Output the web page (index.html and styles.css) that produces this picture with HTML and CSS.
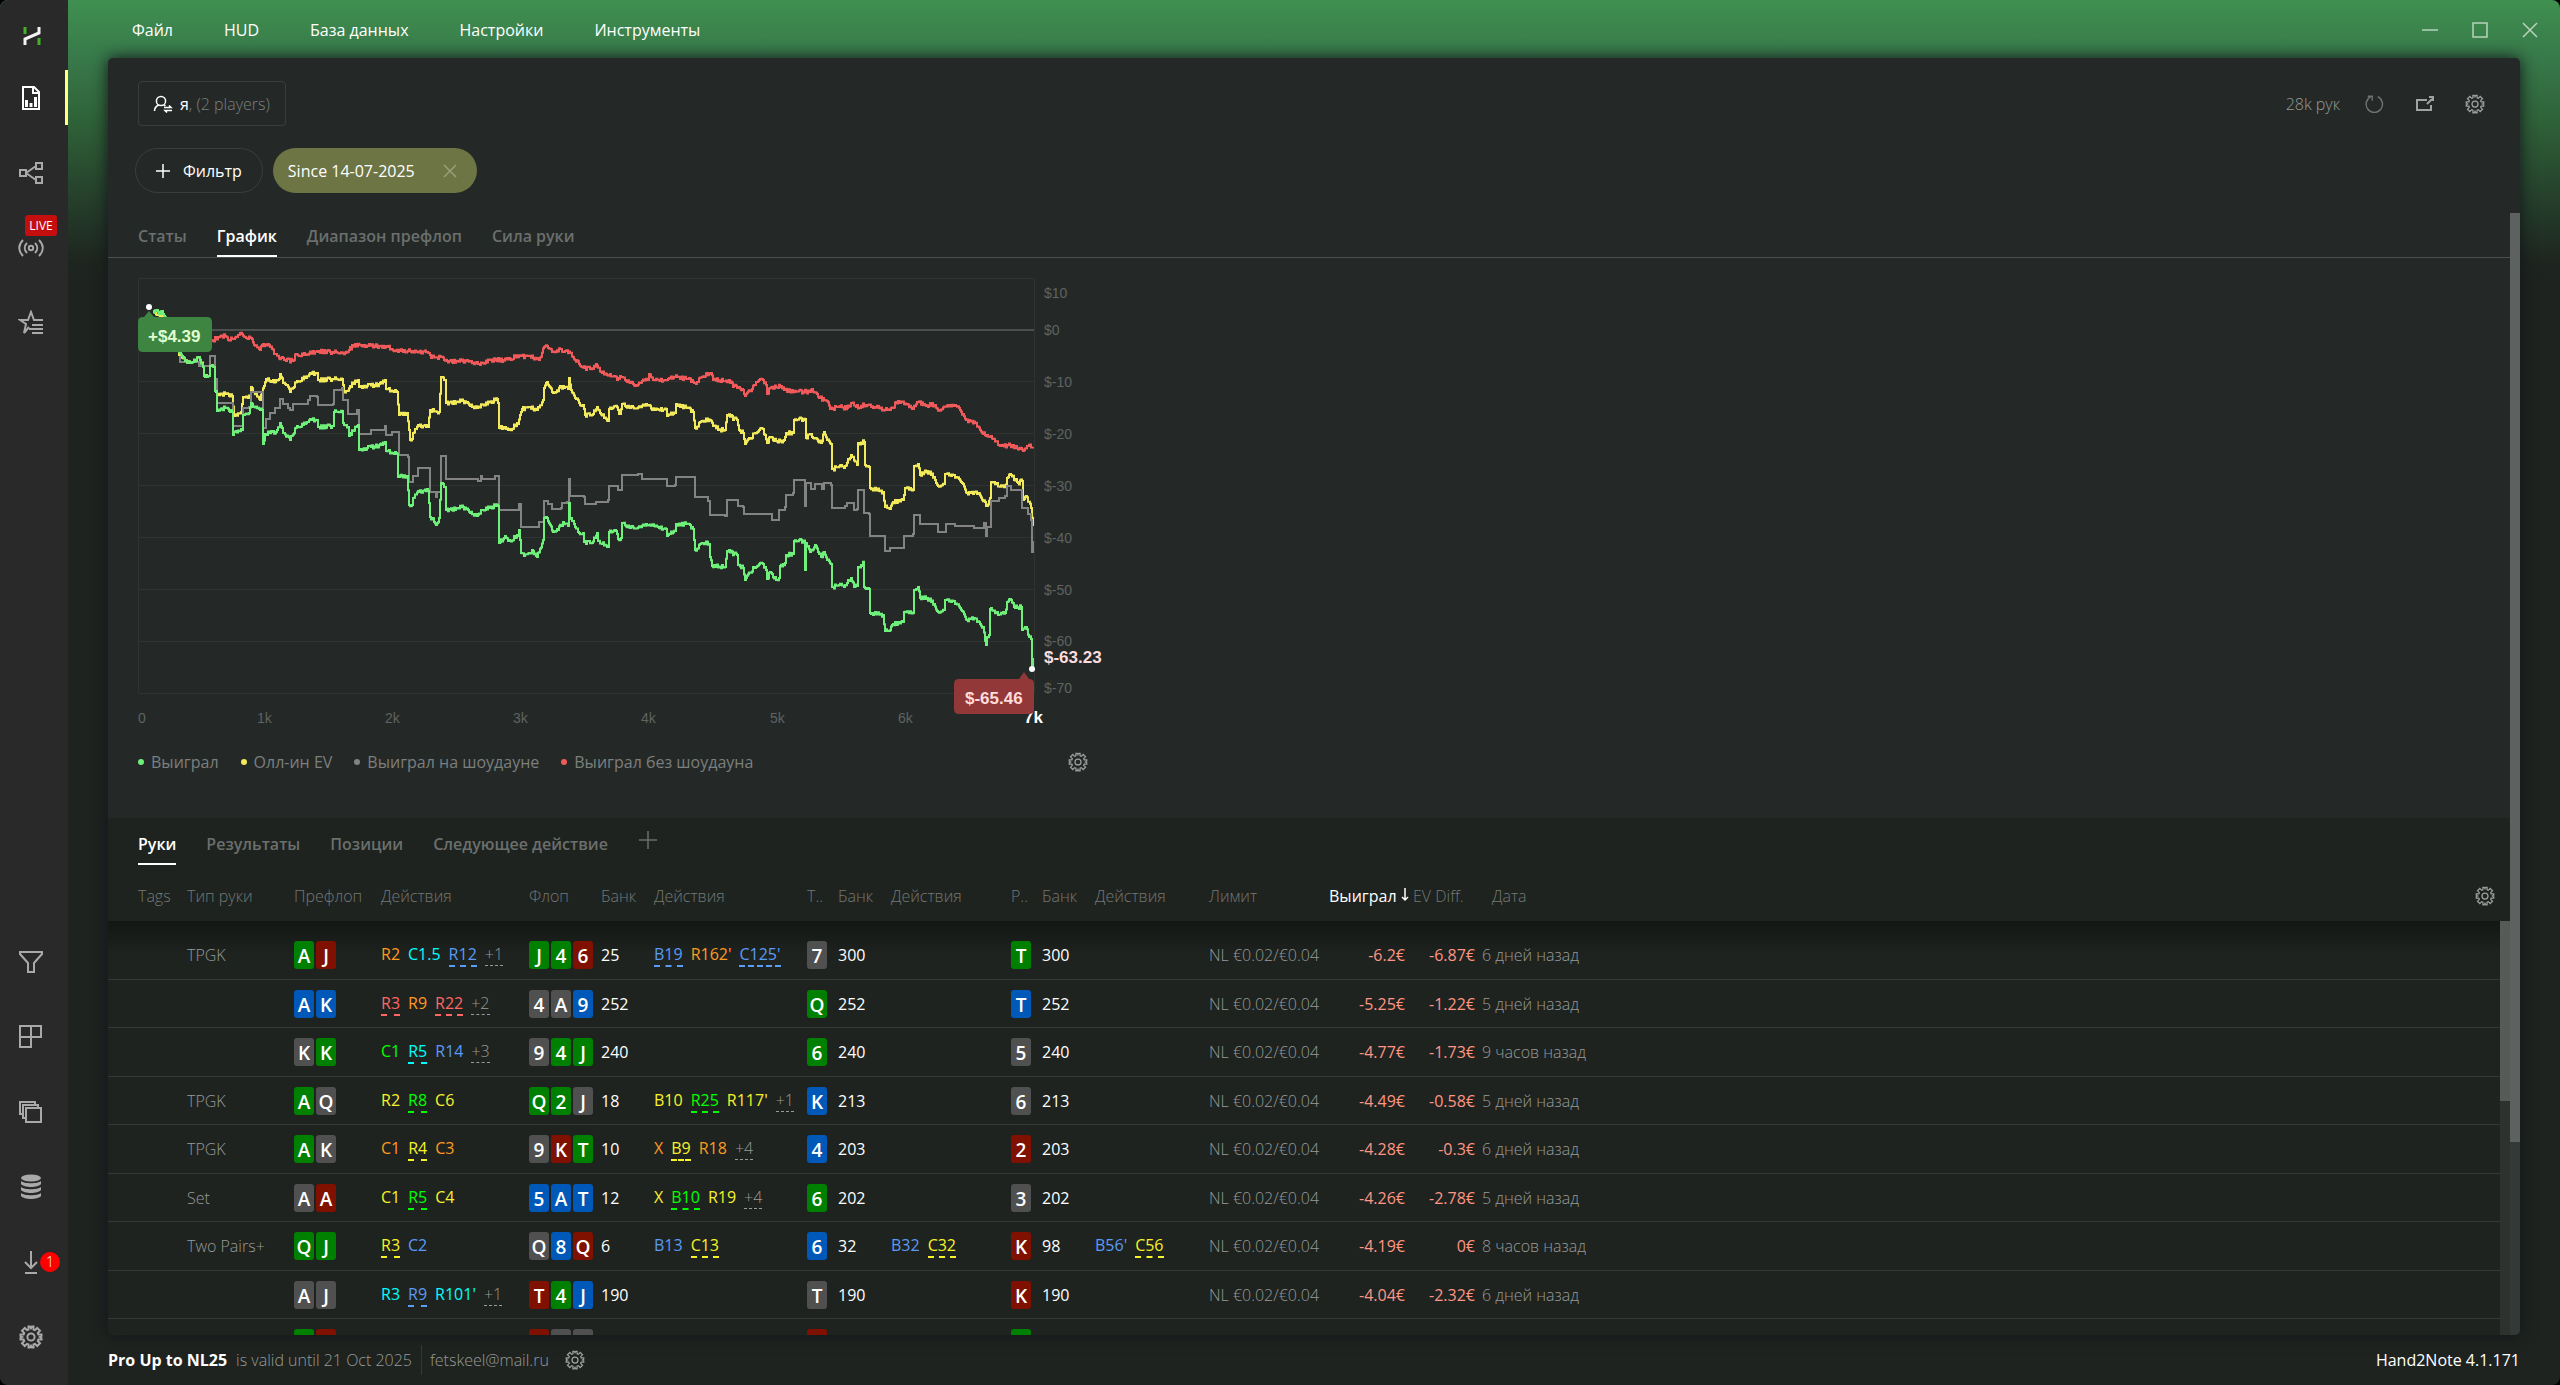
FILE: index.html
```html
<!DOCTYPE html>
<html lang="ru">
<head>
  <meta charset="utf-8">
  <title>Hand2Note</title>
  <link rel="stylesheet" href="styles.css">
</head>
<body>

  <svg class="defs" width="0" height="0" aria-hidden="true">
    <symbol id="gear" viewBox="0 0 24 24">
      <path d="M9.500 4.600 L9.500 1.500 H11 L12 3.200 L13 1.500 H14.500 L14.500 4.600 L16 5.200 L18.200 3 L21 5.800 L18.800 8 L19.400 9.500 H22.500 V11 L20.800 12 L22.500 13 V14.500 H19.400 L18.800 16 L21 18.200 L18.200 21 L16 18.800 L14.500 19.400 V22.500 H13 L12 20.800 L11 22.500 H9.500 V19.400 L8 18.800 L5.800 21 L3 18.200 L5.200 16 L4.600 14.500 H1.500 V13 L3.200 12 L1.500 11 V9.500 H4.600 L5.200 8 L3 5.800 L5.800 3 L8 5.200 Z"/>
      <circle cx="12" cy="12" r="3.600"/>
    </symbol>
  </svg>

  <div class="app">

    <aside class="sidebar">
      <div class="logo">
        <svg width="24" height="24" viewBox="0 0 24 24">
          <path class="logo-green" d="M5 3v7M19 14v7"/>
          <path class="logo-white" d="M5 21v-6L19 9V3"/>
        </svg>
      </div>

      <nav class="side-group">
        <button class="side-btn active" aria-label="Отчёты">
          <svg width="24" height="26" viewBox="0 0 24 26">
            <path d="M4 2h11l5 5v17H4z M14 2v6h6"/>
            <path class="solid" d="M6 15h3v7h-3z M10.500 18h3v4h-3z M15 12h3v10h-3z"/>
          </svg>
        </button>
        <button class="side-btn" aria-label="Дерево">
          <svg width="26" height="24" viewBox="0 0 26 24">
            <path d="M2 9h6v6H2z M18 2h6v6h-6z M18 16h6v6h-6z M8 12L18 5 M8 12l10 7"/>
          </svg>
        </button>
        <button class="side-btn" aria-label="Live">
          <span class="live">LIVE</span>
          <svg width="26" height="20" viewBox="0 0 26 20">
            <circle cx="13" cy="10" r="2.200"/>
            <path d="M9 5c-3 3-3 7 0 10 M17 5c3 3 3 7 0 10 M5 2c-5 5-5 11 0 16 M21 2c5 5 5 11 0 16"/>
          </svg>
        </button>
        <button class="side-btn" aria-label="Избранное">
          <svg width="26" height="26" viewBox="0 0 26 26">
            <path d="M11 17l-5 6 2-9-6-4h8l3-8 3 8h9 M14 15h11 M11 19h14 M14 23h11"/>
          </svg>
        </button>
      </nav>

      <nav class="side-group">
        <button class="side-btn" aria-label="Фильтры">
          <svg width="26" height="26" viewBox="0 0 26 26"><path d="M2 3h22v2l-8 9v9h-6v-9L2 5z"/></svg>
        </button>
        <button class="side-btn" aria-label="Панели">
          <svg width="26" height="26" viewBox="0 0 26 26"><path d="M2 2h21v11H2z M13 2v21H2V2z"/></svg>
        </button>
        <button class="side-btn" aria-label="Окна">
          <svg width="26" height="26" viewBox="0 0 26 26"><path d="M8 9h15v14H8z M8 19H5V6h15v3 M5 15H2V3h15v3"/></svg>
        </button>
        <button class="side-btn" aria-label="База данных">
          <svg width="24" height="28" viewBox="0 0 24 28">
            <ellipse class="solid" cx="12" cy="5" rx="10" ry="3.500"/>
            <path class="solid" d="M2 8c3 3 17 3 20 0v3c-3 4-17 4-20 0z M2 14c3 3 17 3 20 0v3c-3 4-17 4-20 0z M2 20c3 3 17 3 20 0v3c-3 4-17 4-20 0z"/>
          </svg>
        </button>
        <button class="side-btn" aria-label="Загрузки">
          <svg width="26" height="26" viewBox="0 0 26 26"><path d="M13 2v17 M7 13l6 6 6-6 M7 24h12"/></svg>
          <span class="count">1</span>
        </button>
        <button class="side-btn" aria-label="Настройки">
          <svg width="24" height="24"><use href="#gear"/></svg>
        </button>
      </nav>
    </aside>

    <div class="main">

      <header class="titlebar">
        <nav class="menu">
          <button>Файл</button>
          <button>HUD</button>
          <button>База данных</button>
          <button>Настройки</button>
          <button>Инструменты</button>
        </nav>
        <div class="window-btns">
          <button aria-label="Свернуть"><svg width="18" height="18" viewBox="0 0 18 18"><path d="M1 9h16"/></svg></button>
          <button aria-label="Развернуть"><svg width="18" height="18" viewBox="0 0 18 18"><path d="M2 2h14v14H2z"/></svg></button>
          <button aria-label="Закрыть"><svg width="18" height="18" viewBox="0 0 18 18"><path d="M2 2l14 14M16 2L2 16"/></svg></button>
        </div>
      </header>

      <main class="panel">
        <div class="toolbar">
          <button class="player">
            <svg width="20" height="18" viewBox="0 0 20 18">
              <circle cx="8" cy="6" r="4.600"/>
              <path d="M1.500 16c0-3 2-5 4-6 M11 11l1.500-1 M11 12.500h7l-2-2 M19 15.500h-7l2 2"/>
            </svg>
            <span><b>я</b>, (2 players)</span>
          </button>
          <div class="toolbar-right">
            <span>28k рук</span>
            <button class="dim" aria-label="Обновить">
              <svg width="20" height="20" viewBox="0 0 22 22"><path d="M14 3a9 9 0 1 1-7.500 0 M3 2.500h5v5"/></svg>
            </button>
            <button aria-label="Открыть в окне">
              <svg width="20" height="20" viewBox="0 0 20 20"><path class="thick" d="M12 6H2v10h14v-5 M12 10l5-5 M14 3h4v4"/></svg>
            </button>
            <button aria-label="Настройки отчёта"><svg width="20" height="20"><use href="#gear"/></svg></button>
          </div>
        </div>

        <div class="filters">
          <button class="add-filter">
            <svg width="16" height="16" viewBox="0 0 16 16"><path d="M8 1v14M1 8h14"/></svg>
            Фильтр
          </button>
          <button class="chip">
            Since 14-07-2025
            <svg width="14" height="14" viewBox="0 0 14 14"><path d="M1 1l12 12M13 1L1 13"/></svg>
          </button>
        </div>

        <div class="scroll">
          <div class="scroll-body">
            <nav class="tabs">
              <button>Статы</button>
              <button class="active">График</button>
              <button>Диапазон префлоп</button>
              <button>Сила руки</button>
            </nav>

            <section class="graph">
              <svg id="chart" width="980" height="460" viewBox="8 0 980 460">
                <path class="grid" d="M8.500 8.500H904.500V423.500H8.500z M8 111.500h896 M8 163.500h896 M8 215.500h896 M8 267.500h896 M8 319.500h896 M8 371.500h896"/>
                <path class="zero" d="M8 60h896"/>
                <g class="axis">
                  <text x="914" y="28">$10</text>
                  <text x="914" y="65">$0</text>
                  <text x="914" y="117">$-10</text>
                  <text x="914" y="169">$-20</text>
                  <text x="914" y="221">$-30</text>
                  <text x="914" y="273">$-40</text>
                  <text x="914" y="325">$-50</text>
                  <text x="914" y="376">$-60</text>
                  <text x="914" y="423">$-70</text>
                  <text x="8" y="453">0</text>
                  <text x="127" y="453">1k</text>
                  <text x="255" y="453">2k</text>
                  <text x="383" y="453">3k</text>
                  <text x="511" y="453">4k</text>
                  <text x="640" y="453">5k</text>
                  <text x="768" y="453">6k</text>
                </g>
                <g id="lines"></g>
                <text class="current" x="914" y="393">$-63.23</text>
                <text class="last-x" x="894" y="453">7k</text>
                <path class="tip-up" d="M14 47l5-6 5 6h53q5 0 5 5v25q0 5-5 5H13q-5 0-5-5V52q0-5 5-5z"/>
                <text class="tip-up-text" x="18" y="72">+$4.39</text>
                <path class="tip-down" d="M889 409l5-7 5 7q5 0 5 5v25q0 5-5 5h-70q-5 0-5-5v-25q0-5 5-5z"/>
                <text class="tip-down-text" x="835" y="434">$-65.46</text>
                <circle class="dot" cx="19" cy="37" r="3"/>
                <circle class="dot" cx="902" cy="399" r="3"/>
              </svg>
              <div class="legend">
                <ul>
                  <li class="l-green">Выиграл</li>
                  <li class="l-yellow">Олл-ин EV</li>
                  <li class="l-gray">Выиграл на шоудауне</li>
                  <li class="l-red">Выиграл без шоудауна</li>
                </ul>
                <button class="icon-btn" aria-label="Настройки графика"><svg width="20" height="20"><use href="#gear"/></svg></button>
              </div>
            </section>

            <section class="hands">
              <nav class="tabs">
                <button class="active">Руки</button>
                <button>Результаты</button>
                <button>Позиции</button>
                <button>Следующее действие</button>
                <button class="add-tab" aria-label="Добавить"><svg width="20" height="20" viewBox="0 0 20 20"><path d="M10 1v18M1 10h18"/></svg></button>
              </nav>

              <div class="table-wrap">
                <table>
                  <colgroup>
                    <col class="c-tags"><col class="c-type"><col class="c-pre"><col class="c-act1"><col class="c-flop"><col class="c-bank"><col class="c-act2"><col class="c-card"><col class="c-bank"><col class="c-act3"><col class="c-card"><col class="c-bank"><col class="c-act4"><col class="c-limit"><col class="c-won"><col class="c-ev"><col>
                  </colgroup>
                  <thead>
                    <tr>
                      <th>Tags</th><th>Тип руки</th><th>Префлоп</th><th>Действия</th><th>Флоп</th><th>Банк</th><th>Действия</th><th>Т..</th><th>Банк</th><th>Действия</th><th>Р..</th><th>Банк</th><th>Действия</th><th>Лимит</th>
                      <th class="sorted">Выиграл <svg width="8" height="14" viewBox="0 0 8 14"><path d="M4 0v12M1 9l3 3 3-3"/></svg></th>
                      <th class="ev">EV Diff.</th>
                      <th class="date"><div>Дата <button class="icon-btn" aria-label="Колонки"><svg width="20" height="20"><use href="#gear"/></svg></button></div></th>
                    </tr>
                  </thead>
                  <tbody>
                    <tr>
                      <td></td><td>TPGK</td>
                      <td><i class="card g">A</i><i class="card r">J</i></td>
                      <td><span class="a orange">R2</span><span class="a cyan">C1.5</span><span class="a blue u">R12</span><span class="more">+1</span></td>
                      <td><i class="card g">J</i><i class="card g">4</i><i class="card r">6</i></td>
                      <td class="bank">25</td>
                      <td><span class="a blue u">B19</span><span class="a orange">R162'</span><span class="a blue u">C125'</span></td>
                      <td><i class="card s">7</i></td><td class="bank">300</td><td></td>
                      <td><i class="card g">T</i></td><td class="bank">300</td><td></td>
                      <td>NL €0.02/€0.04</td><td class="loss">-6.2€</td><td class="loss">-6.87€</td><td class="date">6 дней назад</td>
                    </tr>
                    <tr>
                      <td></td><td></td>
                      <td><i class="card b">A</i><i class="card b">K</i></td>
                      <td><span class="a red u">R3</span><span class="a orange">R9</span><span class="a red u">R22</span><span class="more">+2</span></td>
                      <td><i class="card s">4</i><i class="card s">A</i><i class="card b">9</i></td>
                      <td class="bank">252</td><td></td>
                      <td><i class="card g">Q</i></td><td class="bank">252</td><td></td>
                      <td><i class="card b">T</i></td><td class="bank">252</td><td></td>
                      <td>NL €0.02/€0.04</td><td class="loss">-5.25€</td><td class="loss">-1.22€</td><td class="date">5 дней назад</td>
                    </tr>
                    <tr>
                      <td></td><td></td>
                      <td><i class="card s">K</i><i class="card g">K</i></td>
                      <td><span class="a green">C1</span><span class="a cyan u">R5</span><span class="a blue">R14</span><span class="more">+3</span></td>
                      <td><i class="card s">9</i><i class="card g">4</i><i class="card g">J</i></td>
                      <td class="bank">240</td><td></td>
                      <td><i class="card g">6</i></td><td class="bank">240</td><td></td>
                      <td><i class="card s">5</i></td><td class="bank">240</td><td></td>
                      <td>NL €0.02/€0.04</td><td class="loss">-4.77€</td><td class="loss">-1.73€</td><td class="date">9 часов назад</td>
                    </tr>
                    <tr>
                      <td></td><td>TPGK</td>
                      <td><i class="card g">A</i><i class="card s">Q</i></td>
                      <td><span class="a yellow">R2</span><span class="a green u">R8</span><span class="a yellow">C6</span></td>
                      <td><i class="card g">Q</i><i class="card g">2</i><i class="card s">J</i></td>
                      <td class="bank">18</td>
                      <td><span class="a yellow">B10</span><span class="a green u">R25</span><span class="a yellow">R117'</span><span class="more">+1</span></td>
                      <td><i class="card b">K</i></td><td class="bank">213</td><td></td>
                      <td><i class="card s">6</i></td><td class="bank">213</td><td></td>
                      <td>NL €0.02/€0.04</td><td class="loss">-4.49€</td><td class="loss">-0.58€</td><td class="date">5 дней назад</td>
                    </tr>
                    <tr>
                      <td></td><td>TPGK</td>
                      <td><i class="card g">A</i><i class="card s">K</i></td>
                      <td><span class="a orange">C1</span><span class="a yellow u">R4</span><span class="a orange">C3</span></td>
                      <td><i class="card s">9</i><i class="card r">K</i><i class="card g">T</i></td>
                      <td class="bank">10</td>
                      <td><span class="a orange">X</span><span class="a yellow u">B9</span><span class="a orange">R18</span><span class="more">+4</span></td>
                      <td><i class="card b">4</i></td><td class="bank">203</td><td></td>
                      <td><i class="card r">2</i></td><td class="bank">203</td><td></td>
                      <td>NL €0.02/€0.04</td><td class="loss">-4.28€</td><td class="loss">-0.3€</td><td class="date">6 дней назад</td>
                    </tr>
                    <tr>
                      <td></td><td>Set</td>
                      <td><i class="card s">A</i><i class="card r">A</i></td>
                      <td><span class="a yellow">C1</span><span class="a green u">R5</span><span class="a yellow">C4</span></td>
                      <td><i class="card b">5</i><i class="card b">A</i><i class="card b">T</i></td>
                      <td class="bank">12</td>
                      <td><span class="a yellow">X</span><span class="a green u">B10</span><span class="a yellow">R19</span><span class="more">+4</span></td>
                      <td><i class="card g">6</i></td><td class="bank">202</td><td></td>
                      <td><i class="card s">3</i></td><td class="bank">202</td><td></td>
                      <td>NL €0.02/€0.04</td><td class="loss">-4.26€</td><td class="loss">-2.78€</td><td class="date">5 дней назад</td>
                    </tr>
                    <tr>
                      <td></td><td>Two Pairs+</td>
                      <td><i class="card g">Q</i><i class="card g">J</i></td>
                      <td><span class="a yellow u">R3</span><span class="a blue">C2</span></td>
                      <td><i class="card s">Q</i><i class="card b">8</i><i class="card r">Q</i></td>
                      <td class="bank">6</td>
                      <td><span class="a blue">B13</span><span class="a yellow u">C13</span></td>
                      <td><i class="card b">6</i></td><td class="bank">32</td>
                      <td><span class="a blue">B32</span><span class="a yellow u">C32</span></td>
                      <td><i class="card r">K</i></td><td class="bank">98</td>
                      <td><span class="a blue">B56'</span><span class="a yellow u">C56</span></td>
                      <td>NL €0.02/€0.04</td><td class="loss">-4.19€</td><td class="loss">0€</td><td class="date">8 часов назад</td>
                    </tr>
                    <tr>
                      <td></td><td></td>
                      <td><i class="card s">A</i><i class="card s">J</i></td>
                      <td><span class="a cyan">R3</span><span class="a blue u">R9</span><span class="a cyan">R101'</span><span class="more">+1</span></td>
                      <td><i class="card r">T</i><i class="card g">4</i><i class="card b">J</i></td>
                      <td class="bank">190</td><td></td>
                      <td><i class="card s">T</i></td><td class="bank">190</td><td></td>
                      <td><i class="card r">K</i></td><td class="bank">190</td><td></td>
                      <td>NL €0.02/€0.04</td><td class="loss">-4.04€</td><td class="loss">-2.32€</td><td class="date">6 дней назад</td>
                    </tr>
                    <tr>
                      <td></td><td></td>
                      <td><i class="card g"></i><i class="card r"></i></td><td></td>
                      <td><i class="card r"></i><i class="card s"></i><i class="card s"></i></td><td></td><td></td>
                      <td><i class="card r"></i></td><td></td><td></td>
                      <td><i class="card g"></i></td><td></td><td></td>
                      <td></td><td></td><td></td><td></td>
                    </tr>
                  </tbody>
                </table>
                <div class="bar bar-inner"><div class="thumb"></div></div>
              </div>
            </section>
          </div>
          <div class="bar bar-outer"><div class="thumb"></div></div>
        </div>
      </main>

      <footer class="status">
        <b>Pro Up to NL25</b>
        <span class="valid">is valid until 21 Oct 2025</span>
        <span class="mail">fetskeel@mail.ru</span>
        <button class="icon-btn" aria-label="Аккаунт"><svg width="20" height="20"><use href="#gear"/></svg></button>
        <span class="version">Hand2Note 4.1.171</span>
      </footer>
    </div>
  </div>

  <script src="chart.js"></script>
</body>
</html>
```
FILE: styles.css
```css
* {
  box-sizing: border-box;
}

body {
  margin: 0;
  background: #000;
  color: #979a98;
  font-family: "Open Sans", "Noto Sans", sans-serif;
  font-size: 16px;
  font-weight: 300;
}

button {
  padding: 0;
  border: 0;
  background: none;
  color: inherit;
  font: inherit;
  cursor: pointer;
}

svg {
  display: block;
  fill: none;
  stroke: currentColor;
  stroke-width: 1.5;
}

.defs {
  position: absolute;
}

.solid {
  fill: currentColor;
  stroke: none;
}

.thick {
  stroke-width: 2;
}

.app {
  display: flex;
  height: 100vh;
  border-radius: 8px;
  overflow: hidden;
  background: linear-gradient(#3f9050 0, #38794a 58px, #2f6238 120px, #253f2b 200px, #1e251f 262px, #1e231f 280px);
}

/* sidebar */
.sidebar {
  flex: 0 0 68px;
  display: flex;
  flex-direction: column;
  background: #292929;
  padding-bottom: 11px;
}

.logo {
  height: 60px;
  padding: 24px 20px 0;
}

.logo svg {
  stroke-width: 3;
}

.logo-green {
  stroke: #43b02a;
}

.logo-white {
  stroke: #f2f2f2;
}

.side-group {
  display: flex;
  flex-direction: column;
}

.side-group + .side-group {
  margin-top: auto;
}

.side-btn {
  position: relative;
  display: flex;
  align-items: center;
  justify-content: center;
  height: 75px;
  padding-right: 6px;
  color: #a9a9a9;
}

.side-btn svg {
  stroke-width: 2;
}

.side-btn.active {
  color: #fff;
}

.side-btn.active::after {
  content: "";
  position: absolute;
  right: 0;
  top: 10px;
  width: 3px;
  height: 55px;
  background: #ffff80;
}

.live {
  position: absolute;
  left: 25px;
  top: 5px;
  width: 32px;
  border-radius: 3px;
  background: #c50f0f;
  color: #fff;
  font-size: 12px;
  font-weight: 400;
  line-height: 21px;
}

.count {
  position: absolute;
  left: 40px;
  top: 28px;
  width: 20px;
  border-radius: 10px;
  background: #f00;
  color: #fff;
  font-size: 14px;
  line-height: 20px;
}

/* title bar */
.main {
  flex: 1;
  min-width: 0;
  display: flex;
  flex-direction: column;
  padding: 0 40px;
}

.titlebar {
  flex: 0 0 58px;
  display: flex;
  justify-content: space-between;
  align-items: center;
  margin-right: -24px;
  padding: 2px 5px 0 24px;
}

.menu {
  display: flex;
  gap: 51px;
  color: #fff;
  font-weight: 400;
}

.window-btns {
  display: flex;
  gap: 32px;
  color: #b7d3bc;
}

/* panel */
.panel {
  flex: 1;
  min-height: 0;
  display: flex;
  flex-direction: column;
  background: #242928;
  border-radius: 5px;
  overflow: hidden;
  box-shadow: 0 0 16px #12151c;
}

.toolbar {
  display: flex;
  justify-content: space-between;
  align-items: center;
  padding: 23px 35px 0 30px;
}

.player {
  display: flex;
  align-items: center;
  gap: 7px;
  height: 45px;
  padding: 0 15px 0 14px;
  border: 1px solid #3a3f3e;
  border-radius: 4px;
  color: #7b7f7d;
}

.player svg,
.player b {
  color: #fff;
  font-weight: 400;
}

.toolbar-right {
  display: flex;
  align-items: center;
  gap: 30px;
  color: #a0a3a1;
}

.toolbar-right span {
  margin-right: -5px;
  color: #979a98;
}

.toolbar-right .dim {
  color: #6f7371;
}

.filters {
  display: flex;
  gap: 10px;
  padding: 22px 27px 20px;
}

.add-filter,
.chip {
  display: flex;
  align-items: center;
  height: 45px;
  border-radius: 23px;
  color: #fff;
  font-weight: 400;
}

.add-filter {
  gap: 12px;
  padding: 0 20px 0 19px;
  border: 1px solid #3a3f3e;
}

.chip {
  gap: 28px;
  padding: 0 20px 0 15px;
  background: #6e7545;
}

.chip svg {
  color: #9a9f7b;
}

/* tabs */
.scroll {
  flex: 1;
  min-height: 0;
  display: flex;
}

.scroll-body {
  flex: 1;
  min-width: 0;
}

.tabs {
  display: flex;
  gap: 30px;
  height: 45px;
  padding-left: 30px;
  border-bottom: 1px solid #4b504e;
  color: #6b6f6d;
  font-weight: 600;
}

.tabs button {
  padding-top: 4px;
  border-bottom: 2px solid transparent;
}

.tabs .active {
  border-color: #fff;
  color: #fff;
}

.bar {
  flex: 0 0 10px;
}

.bar-outer {
  background: #333937;
}

.bar-outer .thumb {
  height: 929px;
  background: #5d6160;
}

.bar-inner {
  margin-top: 50px;
  background: #2e322f;
}

.bar-inner .thumb {
  height: 180px;
  background: #575b57;
}

/* graph */
.graph {
  padding: 12px 30px 0;
  height: 560px;
}

#chart {
  font-family: "Liberation Sans", Arial, sans-serif;
  font-size: 14px;
  font-weight: 400;
}

#chart text {
  stroke: none;
}

.grid {
  stroke: #2f3433;
  stroke-width: 1;
}

.zero {
  stroke: #4b4f4e;
  stroke-width: 2;
}

.axis {
  fill: #5f6361;
}

#chart .current,
#chart .last-x,
#chart .tip-up-text,
#chart .tip-down-text {
  font-size: 17px;
  font-weight: 700;
}

.current,
.tip-down-text {
  fill: #ffdcdc;
}

.last-x,
.dot {
  fill: #fff;
  stroke: none;
}

.tip-up {
  fill: #3d8540;
  stroke: none;
}

.tip-up-text {
  fill: #e0ffd0;
}

.tip-down {
  fill: #933838;
  stroke: none;
}

#lines path {
  stroke-width: 2;
}

.line-green { stroke: #6ff07a; }
.line-yellow { stroke: #f3ea5b; }
.line-gray { stroke: #838383; }
.line-red { stroke: #f05a5a; }

.legend {
  display: flex;
  justify-content: space-between;
  align-items: center;
  width: 950px;
  height: 64px;
}

.legend ul {
  display: flex;
  gap: 22px;
  margin: 0;
  padding: 0;
  list-style: none;
  color: #7c7f7d;
  font-weight: 400;
}

.legend li {
  display: flex;
  align-items: center;
  gap: 7px;
}

.legend li::before {
  content: "";
  width: 6px;
  height: 6px;
  border-radius: 3px;
}

.l-green::before { background: #6ff07a; }
.l-yellow::before { background: #f3ea5b; }
.l-gray::before { background: #838383; }
.l-red::before { background: #f05a5a; }

.icon-btn {
  color: #9da09e;
}

/* hands table */
.hands {
  background: #1e231f;
}

.hands .tabs {
  height: 53px;
  padding-top: 2px;
  padding-bottom: 6px;
  border: 0;
}

.hands .add-tab {
  align-self: flex-start;
  padding-top: 10px;
}

.table-wrap {
  display: flex;
}

table {
  flex: 1;
  width: 100%;
  table-layout: fixed;
  border-collapse: separate;
  border-spacing: 0;
  white-space: nowrap;
}

.c-tags { width: 79px; }
.c-type { width: 107px; }
.c-pre { width: 87px; }
.c-act1 { width: 148px; }
.c-flop { width: 72px; }
.c-bank { width: 53px; }
.c-act2 { width: 153px; }
.c-card { width: 31px; }
.c-act3 { width: 120px; }
.c-act4 { width: 114px; }
.c-limit { width: 120px; }
.c-won { width: 76px; }
.c-ev { width: 70px; }

th,
td {
  padding: 0;
  text-align: left;
}

th:first-child {
  padding-left: 30px;
}

th {
  height: 50px;
  color: #747876;
  font-weight: 300;
}

th.sorted {
  color: #fff;
  font-weight: 400;
}

.sorted svg {
  display: inline-block;
}

th.ev {
  padding-left: 8px;
}

th.date {
  padding-left: 17px;
}

th.date div {
  display: flex;
  justify-content: space-between;
  align-items: center;
  padding-right: 5px;
}

td {
  height: 49px;
  border-bottom: 1px solid #343937;
}

tr:nth-child(even) td {
  height: 48px;
}

tr:first-child td {
  height: 59px;
  padding-top: 10px;
}

tbody tr:first-child {
  background: linear-gradient(#131713, #1e231f 34px);
}

td.date {
  padding-left: 7px;
}

td.bank {
  color: #fff;
  font-weight: 400;
}

td.loss {
  color: #ff9585;
  font-weight: 400;
  text-align: right;
}

.card {
  display: inline-block;
  vertical-align: middle;
  width: 20px;
  height: 28px;
  margin-right: 2px;
  border-radius: 3px;
  color: #fff;
  font-size: 19px;
  font-style: normal;
  font-weight: 600;
  line-height: 30px;
  text-align: center;
}

.card.g { background: #008000; }
.card.r { background: #801000; }
.card.b { background: #0058b8; }
.card.s { background: #505050; }

.a,
.more {
  display: inline-block;
  margin-right: 8px;
  border-bottom: 2px solid transparent;
  font-weight: 400;
}

.u {
  border-bottom: 2px dashed;
}

.more {
  margin-right: 0;
  border-bottom: 1px dashed;
  font-weight: 300;
}

.orange { color: #ff9a1f; }
.cyan { color: #0ff; }
.blue { color: #5a9bf5; }
.red { color: #ff6666; }
.green { color: #0f0; }
.yellow { color: #f7f32a; }

/* status bar */
.status {
  flex: 0 0 50px;
  display: flex;
  align-items: center;
}

.status b {
  color: #fff;
  font-weight: 700;
}

.valid {
  margin-left: 9px;
  padding-right: 9px;
  border-right: 1px solid #343937;
  line-height: 30px;
}

.mail {
  padding: 0 16px 0 8px;
}

.version {
  margin-left: auto;
  color: #fff;
  font-weight: 400;
}
```
FILE: chart.js
```js
// key points of every line, in chart pixels: x y x y ...
const series = [
  { cls: "line-red", noise: 4, pts: "82 71 88 67 95 66 98 70 107 67 110 63 116 68 121 68 124 75 130 80 132 75 138 74 145 84 154 90 163 91 166 84 173 85 187 81 200 82 215 83 223 76 230 75 238 76 250 76 258 77 265 81 280 81 297 82 302 87 311 87 317 91 340 91 350 95 360 90 373 90 385 87 400 86 409 90 414 77 417 76 423 82 430 79 440 83 445 90 455 98 463 99 466 94 472 103 484 106 487 110 490 106 500 113 506 115 512 111 518 110 519 104 523 110 535 110 547 107 558 109 565 113 572 107 581 103 583 110 598 111 604 116 612 119 615 126 622 119 626 112 633 110 636 115 637 124 640 118 651 116 658 121 680 122 682 119 690 128 697 131 700 139 710 137 717 138 722 133 726 137 735 135 745 137 757 140 763 138 766 132 772 132 783 139 787 132 795 135 805 135 809 140 820 135 825 135 830 140 836 150 845 153 850 160 860 167 872 176 880 175 889 179 893 181 898 176 903 177" },
  { cls: "line-yellow", noise: 4, pts: "24 42 27 45 33 46 50 86 55 91 63 92 68 87 73 96 74 105 79 106 80 96 84 97 85 120 87 125 95 124 102 126 104 146 111 142 113 127 120 127 121 117 123 122 130 130 132 122 134 116 136 109 141 112 148 110 150 104 153 113 156 115 160 122 167 111 175 108 180 103 187 103 188 110 203 109 212 109 214 122 217 121 220 116 228 110 229 117 247 115 255 110 256 119 267 122 269 145 277 143 279 160 280 170 282 169 283 163 288 155 298 157 300 140 309 142 311 107 315 110 316 133 333 131 347 138 367 129 368 133 369 158 373 157 378 160 388 154 392 139 400 137 407 140 413 130 414 118 417 112 423 123 433 116 438 119 439 108 441 120 449 133 453 135 455 145 462 145 467 137 470 143 478 151 479 139 485 136 490 144 492 134 500 138 519 135 522 140 536 139 537 146 545 143 546 134 557 138 563 142 565 158 572 151 580 150 583 156 590 160 595 160 597 145 607 150 609 160 613 163 615 174 625 163 633 159 637 173 640 167 646 171 653 171 656 163 663 163 664 150 675 149 676 168 680 164 691 173 694 162 697 170 701 174 702 199 715 196 721 185 727 195 728 173 734 172 735 195 739 197 740 218 753 222 755 237 760 239 763 232 773 230 775 218 783 220 784 196 788 194 790 205 797 201 804 207 808 216 814 214 815 204 824 205 832 213 837 223 848 223 855 232 857 236 860 228 861 212 875 217 877 208 881 205 888 213 892 211 893 230 896 226 901 238 903 256 903 247" },
  { cls: "line-gray", noise: 0, pts: "50 86 50 92 69 92 69 96 79 96 80 86 84 86 85 109 87 109 87 133 102 133 103 156 111 156 113 138 119 137 121 122 132 122 133 158 136 149 140 143 145 138 150 129 153 134 158 138 160 140 163 134 178 130 180 126 187 127 188 135 203 134 204 120 212 118 213 130 218 135 218 144 227 140 228 140 229 164 241 164 241 160 253 160 255 156 256 165 262 162 268 162 269 185 278 187 279 212 282 212 283 206 288 198 299 198 300 222 305 222 306 227 307 222 310 222 311 186 315 186 316 209 337 209 348 211 351 206 352 209 365 206 368 206 369 240 388 240 389 234 391 257 407 257 409 252 413 252 414 231 418 234 422 239 431 238 432 233 437 232 439 209 440 226 454 227 455 234 466 232 478 230 479 216 488 220 491 220 492 205 508 204 512 209 536 209 537 216 545 215 546 207 564 207 565 227 578 231 580 245 595 246 597 230 607 230 608 236 613 237 614 244 641 244 642 250 648 250 649 240 655 237 656 225 663 223 664 210 675 209 675 236 676 213 681 219 685 214 692 219 694 213 701 215 702 238 715 236 717 233 724 240 727 239 728 220 733 220 734 243 739 244 740 266 753 266 755 281 759 281 760 278 773 278 774 266 783 264 784 245 789 245 790 254 804 254 808 262 815 262 816 254 825 256 844 258 854 253 856 266 857 257 860 257 861 231 869 228 875 226 877 216 881 220 891 220 892 238 898 244 901 250 902 282 903 271" },
  { cls: "line-green", noise: 4, pts: "23 41 27 40 29 44 32 41 33 44 50 83 55 91 63 92 68 87 73 97 74 106 79 106 80 96 84 97 85 121 87 122 87 141 95 138 102 142 103 165 104 162 112 160 113 145 119 143 121 133 123 137 132 140 133 174 135 164 146 162 150 153 153 163 160 170 167 156 173 155 180 149 187 150 188 157 203 156 204 142 212 141 213 153 218 157 219 166 227 156 228 155 229 180 247 176 255 172 256 181 267 184 268 207 277 206 279 235 282 235 283 228 288 221 298 221 300 247 302 248 306 255 309 248 311 213 315 217 316 240 333 237 347 246 353 240 367 235 368 236 369 273 375 266 378 271 388 266 389 260 391 283 394 286 403 281 407 287 413 270 414 248 417 248 423 262 431 256 433 252 438 256 439 233 440 249 443 251 448 262 453 263 454 272 462 273 467 263 468 271 478 277 479 262 485 260 488 269 491 268 492 253 500 258 519 255 536 259 537 266 545 261 546 254 557 254 563 259 565 280 572 273 579 274 580 287 582 296 595 297 597 281 607 285 608 295 613 298 615 310 624 297 633 294 636 300 637 309 640 302 646 310 649 308 650 296 655 293 656 285 663 284 664 271 675 271 675 300 676 273 680 282 685 275 691 287 694 282 697 290 701 294 702 317 715 315 721 308 724 317 727 316 728 297 734 293 734 317 739 319 740 343 753 345 755 361 759 361 763 354 773 352 774 342 783 343 784 320 788 317 790 328 797 328 804 334 808 342 814 340 815 330 824 331 832 341 837 350 844 348 853 357 856 375 857 367 860 364 860 339 866 343 875 343 877 332 881 330 884 337 891 337 892 360 896 357 899 367 901 369 902 398 903 388" }
];

// small swings of single hands, the same for every line
function swing(x) {
  const n = Math.sin(x * 127.1) * 43758.5453;
  return n - Math.floor(n) - 0.5;
}

function linePath(points, noise) {
  const p = points.split(" ").map(Number);
  let d = `M${p[0]} ${p[1]}`;
  for (let i = 2; i < p.length; i += 2) {
    const x0 = p[i - 2], y0 = p[i - 1], x1 = p[i], y1 = p[i + 1];
    if (noise) {
      for (let x = x0 + 1; x < x1; x++) {
        const y = y0 + (y1 - y0) * (x - x0) / (x1 - x0) + swing(x) * noise;
        d += `H${x}V${y.toFixed(1)}`;
      }
    }
    d += `H${x1}V${y1}`;
  }
  return d;
}

const lines = document.getElementById("lines");
series.forEach(s => {
  const path = document.createElementNS("http://www.w3.org/2000/svg", "path");
  path.setAttribute("class", s.cls);
  path.setAttribute("d", linePath(s.pts, s.noise));
  lines.appendChild(path);
});
```
